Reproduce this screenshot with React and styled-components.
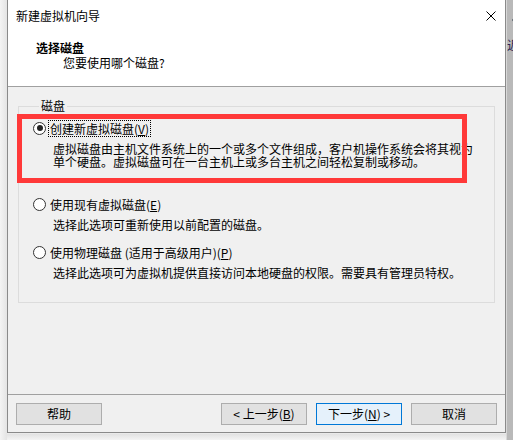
import React from 'react';
import styled, { createGlobalStyle } from 'styled-components';

const GlobalStyle = createGlobalStyle`
  html, body {
    margin: 0;
    padding: 0;
    background: #ededed;
  }
  body {
    font-family: "Noto Sans CJK SC", "Noto Sans", sans-serif;
    font-size: 12px;
    color: #000;
  }
`;

const Screen = styled.div`
  width: 513px;
  height: 440px;
  display: flex;
  overflow: hidden;
  background: linear-gradient(to bottom, #f2f2f2 0, #f2f2f2 433px, #e2e2e2 434px, #f4f4f4 440px);
`;

const Gutter = styled.div`
  width: 7px;
  flex: none;
  background: linear-gradient(to right, #f4f4f4, #e4e4e4);
`;

const Window = styled.div`
  position: relative;
  width: 497px;
  height: 432px;
  flex: none;
  display: flex;
  flex-direction: column;
  border-left: 1px solid #8a8a8a;
  border-right: 1px solid #8a8a8a;
  border-bottom: 1px solid #8a8a8a;
  background: #f0f0f0;
`;

const Backdrop = styled.div`
  flex: 1;
  display: flex;
  flex-direction: column;
  align-items: center;
  background: #b9b9b9;
  border-left: 1px solid #d8d8d8;
`;

const BackIcon = styled.div`
  margin-top: 14px;
  margin-left: 2px;
  width: 0;
  height: 0;
  border-top: 6px solid transparent;
  border-bottom: 6px solid transparent;
  border-right: 5px solid #3e4b58;
`;

const BackGlyph = styled.div`
  margin-top: 12px;
  font-size: 12px;
  color: #2a2250;
  line-height: 14px;
  white-space: nowrap;
`;

const TitleBar = styled.div`
  height: 31px;
  display: flex;
  align-items: center;
  justify-content: space-between;
  padding: 0 9px 0 8px;
  background: #fff;
  line-height: 14px;
`;

const Header = styled.div`
  height: 56px;
  background: #fff;
  padding: 9px 0 0 28px;
  box-sizing: border-box;
  border-bottom: 1px solid #a0a0a0;
  line-height: 15px;
`;

const HeaderTitle = styled.div`
  font-weight: 700;
`;

const HeaderSub = styled.div`
  padding-left: 27px;
`;

const Body = styled.div`
  flex: 1;
  padding: 12px 10px 0;
`;

const Group = styled.fieldset`
  margin: 0;
  border: 1px solid #dcdcdc;
  padding: 7px 0 23px 14px;
  min-width: 0;
`;

const Legend = styled.legend`
  margin-left: 6px;
  padding: 0 2px;
  line-height: 14px;
`;

const Option = styled.div`
  margin-bottom: ${p => p.$gap}px;
`;

const RadioLine = styled.div`
  display: flex;
  align-items: center;
  height: 16px;
  gap: 3px;
`;

const Radio = styled.span`
  width: 11px;
  height: 11px;
  flex: none;
  border: 1px solid #333;
  border-radius: 50%;
  background: #fff;
  display: flex;
  align-items: center;
  justify-content: center;

  &::after {
    content: '';
    width: 6px;
    height: 6px;
    border-radius: 50%;
    background: #222;
    display: ${p => (p.$checked ? 'block' : 'none')};
  }
`;

const Label = styled.span`
  line-height: 15px;
  padding: 0 1px;
  outline: ${p => (p.$focused ? '1px dotted #000' : 'none')};
`;

const Desc = styled.div`
  margin-top: 6px;
  padding-left: 20px;
  line-height: 13px;
  white-space: nowrap;
`;

const Footer = styled.div`
  height: 38px;
  border-top: 1px solid #a0a0a0;
  display: flex;
  align-items: flex-start;
  padding: 8px 8px 0;
  gap: 9px;
  box-sizing: border-box;
`;

const Button = styled.button`
  width: 86px;
  height: 22px;
  padding: 0;
  font: inherit;
  color: #000;
  line-height: 18px;
  background: ${p => (p.$default ? '#e5f1fb' : '#e1e1e1')};
  border: 1px solid ${p => (p.$default ? '#0078d7' : '#adadad')};
  border-radius: 0;
`;

const Spacer = styled.div`
  flex: 1;
`;

const Highlight = styled.div`
  position: absolute;
  left: 9px;
  top: 114px;
  width: 440px;
  height: 59px;
  border: 5px solid #ff3939;
  pointer-events: none;
`;

const CloseIcon = () => (
  <svg width="10" height="10" viewBox="0 0 10 10">
    <path d="M0.5 0.5 L9.5 9.5 M9.5 0.5 L0.5 9.5" stroke="#000" strokeWidth="1" fill="none" />
  </svg>
);

const options = [
  {
    label: <>创建新虚拟磁盘(<u>V</u>)</>,
    lines: [
      '虚拟磁盘由主机文件系统上的一个或多个文件组成，客户机操作系统会将其视为',
      '单个硬盘。虚拟磁盘可在一台主机上或多台主机之间轻松复制或移动。',
    ],
    checked: true,
    gap: 28,
  },
  {
    label: <>使用现有虚拟磁盘(<u>E</u>)</>,
    lines: ['选择此选项可重新使用以前配置的磁盘。'],
    gap: 13,
  },
  {
    label: <>使用物理磁盘 (适用于高级用户)(<u>P</u>)</>,
    lines: ['选择此选项可为虚拟机提供直接访问本地硬盘的权限。需要具有管理员特权。'],
    gap: 0,
  },
];

export default function App() {
  return (
    <>
      <GlobalStyle />
      <Screen>
        <Gutter />
        <Window>
          <TitleBar>
            <span>新建虚拟机向导</span>
            <CloseIcon />
          </TitleBar>
          <Header>
            <HeaderTitle>选择磁盘</HeaderTitle>
            <HeaderSub>您要使用哪个磁盘?</HeaderSub>
          </Header>
          <Body>
            <Group>
              <Legend>磁盘</Legend>
              {options.map((o, i) => (
                <Option key={i} $gap={o.gap}>
                  <RadioLine>
                    <Radio $checked={o.checked} />
                    <Label $focused={o.checked}>{o.label}</Label>
                  </RadioLine>
                  <Desc>
                    {o.lines.map((l, j) => (
                      <div key={j}>{l}</div>
                    ))}
                  </Desc>
                </Option>
              ))}
            </Group>
          </Body>
          <Footer>
            <Button>帮助</Button>
            <Spacer />
            <Button>&lt; 上一步(<u>B</u>)</Button>
            <Button $default>下一步(<u>N</u>) &gt;</Button>
            <Button>取消</Button>
          </Footer>
          <Highlight />
        </Window>
        <Backdrop>
          <BackIcon />
          <BackGlyph>近</BackGlyph>
        </Backdrop>
      </Screen>
    </>
  );
}
